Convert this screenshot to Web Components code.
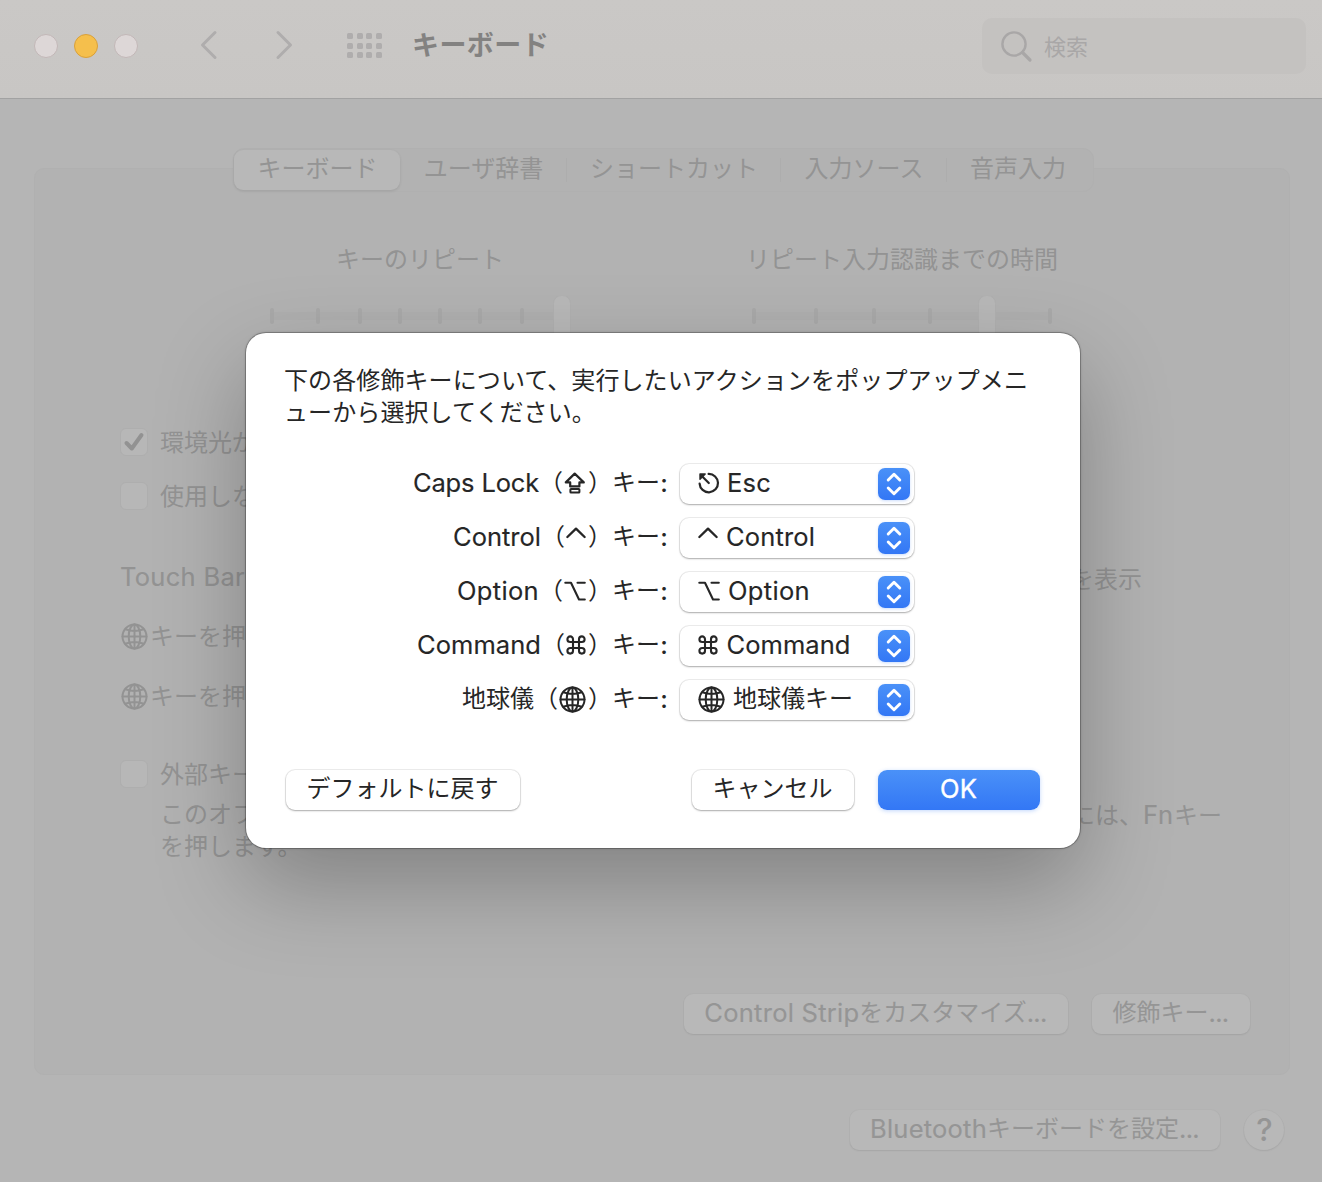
<!DOCTYPE html>
<html lang="ja">
<head>
<meta charset="utf-8">
<title>キーボード</title>
<style>
  html, body { margin: 0; height: 100%; }
  body { font: 24px/32px Inter, "Noto Sans CJK JP", sans-serif; background: #b5b5b5; overflow: hidden; }
</style>
</head>
<body>
<keyboard-preferences></keyboard-preferences>
<script>
const ICONS = {
  caps: [22, 24, '<path d="M10.7 2.6 19.8 11.4H15.4V15.4H6.2V11.4H1.8Z" stroke-width="2.2"/><rect x="6.4" y="18" width="9" height="3.6" rx=".6" stroke-width="2"/>'],
  ctrl: [20, 24, '<path d="M1.4 12 10 3.6 18.6 12" stroke-width="2.3"/>'],
  opt: [22, 24, '<path d="M1.3 3.8H7L15 20.5H20.8M13.5 3.8H20.8" stroke-width="2.1"/>'],
  cmd: [20, 24, '<path d="M7 9.2V6.2A2.8 2.8 0 1 0 4.2 9H15.8A2.8 2.8 0 1 0 13 6.2V17.8A2.8 2.8 0 1 0 15.8 15H4.2A2.8 2.8 0 1 0 7 17.8Z" stroke-width="2.1"/>'],
  esc: [22, 24, '<path d="M10.6 2.9A9.2 9.2 0 1 1 1.6 12.6" stroke-width="2.2"/><path d="M3 4.2 10.8 12" stroke-width="2.2"/><path d="M2 8.2V3H7.2Z" fill="currentColor" stroke-width="1.4"/>'],
  globe: [27, 27, '<g stroke-width="2"><circle cx="13.5" cy="13.5" r="12"/><ellipse cx="13.5" cy="13.5" rx="5.8" ry="12"/><path d="M13.5 1.5V25.5M1.5 13.5H25.5M4.4 6.2Q13.5 9.6 22.6 6.2M4.4 20.8Q13.5 17.4 22.6 20.8"/></g>'],
  back: [18, 30, '<path d="M15 2.5 2.5 15 15 27.5" stroke-width="3"/>'],
  forward: [18, 30, '<path d="M3 2.5 15.5 15 3 27.5" stroke-width="3"/>'],
  search: [34, 34, '<circle cx="15" cy="15" r="11.6" stroke-width="2.4"/><path d="M23.5 23.5 31 31" stroke-width="3.2"/>'],
  updown: [18, 26, '<path d="M3.2 9 9 3.2 14.8 9M3.2 17 9 22.8 14.8 17" stroke-width="2.9"/>'],
  check: [28, 28, '<path d="M6.5 15 11.8 20.5 21.5 7" stroke-width="4"/>']
};

function define(name, css, html, setup) {
  customElements.define(name, class extends HTMLElement {
    connectedCallback() {
      if (this.shadowRoot) return;
      const root = this.attachShadow({ mode: 'open' });
      root.innerHTML = `<style>:host{display:block;box-sizing:border-box}${css}</style>` + (typeof html === 'function' ? html(this) : html);
      if (setup) setup(this, root);
    }
  });
}

define('line-icon', ':host{display:inline-flex;flex:none}svg{display:block}', el => {
  const [w, h, body] = ICONS[el.getAttribute('name')];
  return `<svg width="${w}" height="${h}" viewBox="0 0 ${w} ${h}" fill="none" stroke="currentColor" stroke-linecap="round" stroke-linejoin="round">${body}</svg>`;
});

// Text run tracked so that it takes exactly the width given in "w".
define('tracked-text', ':host{display:inline-block;flex:none;white-space:nowrap;font-size:25.5px;-webkit-text-stroke:.15px currentColor}span{display:inline-block}', '<span><slot></slot></span>', (el, root) => {
  const target = Number(el.getAttribute('w'));
  const span = root.querySelector('span');
  const n = el.textContent.length;
  span.style.letterSpacing = (target - span.getBoundingClientRect().width) / n + 'px';
  el.style.width = target + 'px';
});

define('push-button', `
  :host{display:flex;justify-content:center;align-items:center;height:40px;border-radius:9px;background:#fff;color:#262626;
    padding:0 1px 2px 0;white-space:nowrap;box-shadow:0 0 0 1px rgba(0,0,0,.07),0 1px 2px rgba(0,0,0,.28)}
  :host([primary]){background:linear-gradient(#4a91f8,#3377f5);color:#fff;box-shadow:0 1px 4px rgba(51,119,245,.3)}
  :host([dim]){background:#b8b8b8;color:#959595;box-shadow:0 0 0 1px rgba(0,0,0,.015),0 1px 2px rgba(0,0,0,.07)}
  :host([round]){border-radius:50%;width:40px;font-size:31px;font-weight:500;padding:0 0 0 1px}
`, '<slot></slot>');

define('pop-up', `
  :host{display:flex;align-items:center;width:234px;height:40px;border-radius:9px;background:#fff;padding:0 4px 0 17.5px;
    box-shadow:0 0 0 1px rgba(0,0,0,.07),0 1px 2px rgba(0,0,0,.28)}
  .value{display:flex;align-items:center;flex:1;padding-bottom:2px}
  .knob{width:32px;height:32px;border-radius:7px;background:linear-gradient(#4a91f8,#3377f5);color:#fff;
    display:flex;align-items:center;justify-content:center;box-shadow:0 1px 3px rgba(51,119,245,.25)}
`, '<div class="value"><slot></slot></div><div class="knob"><line-icon name="updown"></line-icon></div>');

define('key-row', `
  :host{display:flex;height:40px;align-items:center}
  .label{width:422px;display:flex;justify-content:flex-end;align-items:center;padding-bottom:2px;margin-right:12px;white-space:nowrap;flex:none}
  ::slotted(line-icon){margin:0 2px 0 1px}
  .colon{font-size:25px;width:8px;text-align:center;font-weight:500}
`, '<div class="label"><slot name="key"></slot><span>（</span><slot name="icon"></slot><span>）キー</span><span class="colon">:</span></div><slot></slot>');

define('check-box', `
  :host{display:flex;align-items:center;height:32px;gap:12px}
  .box{width:28px;height:28px;box-sizing:border-box;border:1px solid #aeaeae;border-radius:6px;background:#b7b7b7;flex:none}
  line-icon{margin:-1px;color:#929292}
  .t{white-space:nowrap;padding-top:2px}
`, el => `<div class="box">${el.hasAttribute('checked') ? '<line-icon name="check"></line-icon>' : ''}</div><div class="t"><slot></slot></div>`);

define('tick-slider', ':host{height:40px}svg{display:block}', el => {
  const ticks = el.getAttribute('ticks').split(',').map(Number);
  const end = Number(el.getAttribute('end')), thumb = Number(el.getAttribute('thumb'));
  return `<svg width="316" height="40"><rect x="${ticks[0]}" y="16" width="${end - ticks[0]}" height="8" rx="3" fill="#afafaf"/>` +
    ticks.map(x => `<rect x="${x - 2}" y="12" width="4" height="16" rx="2" fill="#a9a9a9"/>`).join('') +
    `<rect x="${thumb - 8.5}" y="-.5" width="17" height="45" rx="8" fill="#b8b8b8" stroke="#b0b0b0" stroke-width="1"/></svg>`;
});

define('segment-tabs', `
  :host{display:flex;width:861px;height:44px;border-radius:11px;background:#b2b2b2;border:1px solid #b0b0b0;align-items:center;position:relative;color:#949494}
  div{height:40px;line-height:38px;text-align:center;box-sizing:border-box;white-space:nowrap;padding-left:1px}
  .on{background:#b8b8b8;border-radius:9px;box-shadow:0 1px 3px rgba(0,0,0,.1)}
  i{width:1px;height:24px;background:#adadad}
`, `<div class="on" style="width:166px">キーボード</div><div style="width:166px">ユーザ辞書</div><i></i>
  <div style="width:213px">ショートカット</div><i></i><div style="width:165px">入力ソース</div><i></i><div style="width:141px">音声入力</div>`);

define('window-toolbar', `
  :host{display:flex;height:99px;background:linear-gradient(#cac8c6,#c8c6c4);border-bottom:1px solid #a2a2a2;padding:0 16px 0 34px}
  .lights{display:flex;gap:16px;height:92px;align-items:center}
  .lights b{width:24px;height:24px;box-sizing:border-box;border-radius:50%;background:#ddd7d7;border:1px solid #c2b7b7}
  .lights b.y{background:#f5bf4c;border-color:#d9a03a}
  .nav{display:flex;height:90px;align-items:center;color:#afadad;margin-left:62px;gap:57px}
  .grid{display:grid;grid-template-columns:repeat(4,6px);gap:3.7px;align-content:center;height:91px;margin-left:54px}
  .grid b{height:6px;border-radius:1.5px;background:#afadad}
  h1{font-size:27px;line-height:92px;font-weight:700;color:#838281;margin:0 0 0 30px;letter-spacing:.4px}
  .search{display:flex;align-items:center;width:324px;height:56px;box-sizing:border-box;border-radius:10px;background:#c4c2c0;margin:18px 0 0 auto;padding-left:18px;color:#a9a7a7;font-size:22px}
  .search line-icon{margin-left:-1px}
  .search span{margin:2px 0 0 11px}
`, `<div class="lights"><b></b><b class="y"></b><b></b></div>
  <div class="nav"><line-icon name="back"></line-icon><line-icon name="forward"></line-icon></div>
  <div class="grid">${'<b></b>'.repeat(12)}</div><h1>キーボード</h1>
  <div class="search"><line-icon name="search"></line-icon><span>検索</span></div>`);

define('settings-pane', `
  :host{width:1256px;height:907px;margin:-24px auto 0 34px;background:#b2b2b2;border:1px solid #b0b0b0;border-radius:10px;padding:75px 39px 0 85px;color:#939393}
  .sliders{display:flex;height:93px;padding-left:142px;gap:166px}
  .sliders section{width:316px;text-align:center}
  tick-slider{margin-top:20px}
  .row{display:flex;align-items:center;height:32px;white-space:nowrap}
  .row .right{margin-left:auto}
  .g{gap:2px}
  .g line-icon{margin:0 0 1px 1px}
  .desc{padding-left:40px}
  .buttons{display:flex;justify-content:flex-end;gap:24px;margin-top:131px}
`, `<div class="sliders">
    <section>キーのリピート<tick-slider ticks="10,56,98,138,178,218,260" end="300" thumb="300"></tick-slider></section>
    <section>リピート入力認識までの時間<tick-slider ticks="10,72,130,186,306" end="306" thumb="243"></tick-slider></section>
  </div>
  <check-box checked style="margin-top:89px">環境光が</check-box>
  <check-box style="margin-top:22px">使用しな</check-box>
  <div class="row" style="margin-top:49px;padding-right:108px"><tracked-text w="125">Touch Bar</tracked-text><span>に</span><span class="right" style="padding-top:5px">を表示</span></div>
  <div class="row g" style="margin-top:28px"><line-icon name="globe"></line-icon><span>キーを押</span></div>
  <div class="row g" style="margin-top:28px"><line-icon name="globe"></line-icon><span>キーを押</span></div>
  <check-box style="margin-top:45px">外部キー</check-box>
  <div class="row desc" style="margin-top:9px;padding-right:28px"><span>このオフ</span><span class="right">には、<tracked-text w="31">Fn</tracked-text>キー</span></div>
  <div class="row desc">を押します。</div>
  <div class="buttons"><push-button dim style="width:384px"><tracked-text w="155">Control Strip</tracked-text>をカスタマイズ<tracked-text w="20">...</tracked-text></push-button>
  <push-button dim style="width:158px">修飾キー<tracked-text w="20">...</tracked-text></push-button></div>`);

define('modifier-sheet', `
  :host{position:absolute;left:246px;top:333px;width:834px;height:515px;border-radius:20px;background:#fff;color:#262626;padding:32px 38px 0;
    box-shadow:0 0 0 1px rgba(0,0,0,.2),0 0 2px 1px rgba(0,0,0,.15),0 36px 90px rgba(0,0,0,.27)}
  p{margin:0;height:64px;white-space:nowrap;letter-spacing:.1px}
  .rows{display:flex;flex-direction:column;gap:14px;margin:35px 0 0 -38px}
  .actions{display:flex;margin:50px 2px 0;gap:24px}
  .actions > :first-child{margin-right:auto}
`, `<p>下の各修飾キーについて、実行したいアクションをポップアップメニ<br>ューから選択してください。</p>
  <div class="rows">
    <key-row><tracked-text slot="key" w="126">Caps Lock</tracked-text><line-icon slot="icon" name="caps"></line-icon>
      <pop-up><line-icon name="esc"></line-icon><tracked-text w="44" style="margin-left:7.5px">Esc</tracked-text></pop-up></key-row>
    <key-row><tracked-text slot="key" w="88">Control</tracked-text><line-icon slot="icon" name="ctrl"></line-icon>
      <pop-up><line-icon name="ctrl"></line-icon><tracked-text w="89" style="margin-left:8.5px">Control</tracked-text></pop-up></key-row>
    <key-row><tracked-text slot="key" w="82">Option</tracked-text><line-icon slot="icon" name="opt"></line-icon>
      <pop-up><line-icon name="opt"></line-icon><tracked-text w="82" style="margin-left:8.5px">Option</tracked-text></pop-up></key-row>
    <key-row><tracked-text slot="key" w="124">Command</tracked-text><line-icon slot="icon" name="cmd"></line-icon>
      <pop-up><line-icon name="cmd"></line-icon><tracked-text w="124" style="margin-left:9px">Command</tracked-text></pop-up></key-row>
    <key-row><span slot="key">地球儀</span><line-icon slot="icon" name="globe"></line-icon>
      <pop-up><line-icon name="globe"></line-icon><span style="margin-left:8.5px">地球儀キー</span></pop-up></key-row>
  </div>
  <div class="actions"><push-button style="width:234px">デフォルトに戻す</push-button><push-button style="width:162px">キャンセル</push-button><push-button primary style="width:162px"><tracked-text w="37" style="-webkit-text-stroke-width:.4px">OK</tracked-text></push-button></div>`);

define('keyboard-preferences', `
  :host{height:1182px;background:#b5b5b5;overflow:hidden;position:relative}
  segment-tabs{margin:49px 0 0 233px}
  .footer{display:flex;justify-content:flex-end;gap:24px;padding:35px 38px 0 0}
`, `<window-toolbar></window-toolbar><segment-tabs></segment-tabs><settings-pane></settings-pane>
  <div class="footer"><push-button dim style="width:370px"><tracked-text w="117">Bluetooth</tracked-text>キーボードを設定<tracked-text w="20">...</tracked-text></push-button><push-button dim round>?</push-button></div>
  <modifier-sheet></modifier-sheet>`);
</script>
</body>
</html>
